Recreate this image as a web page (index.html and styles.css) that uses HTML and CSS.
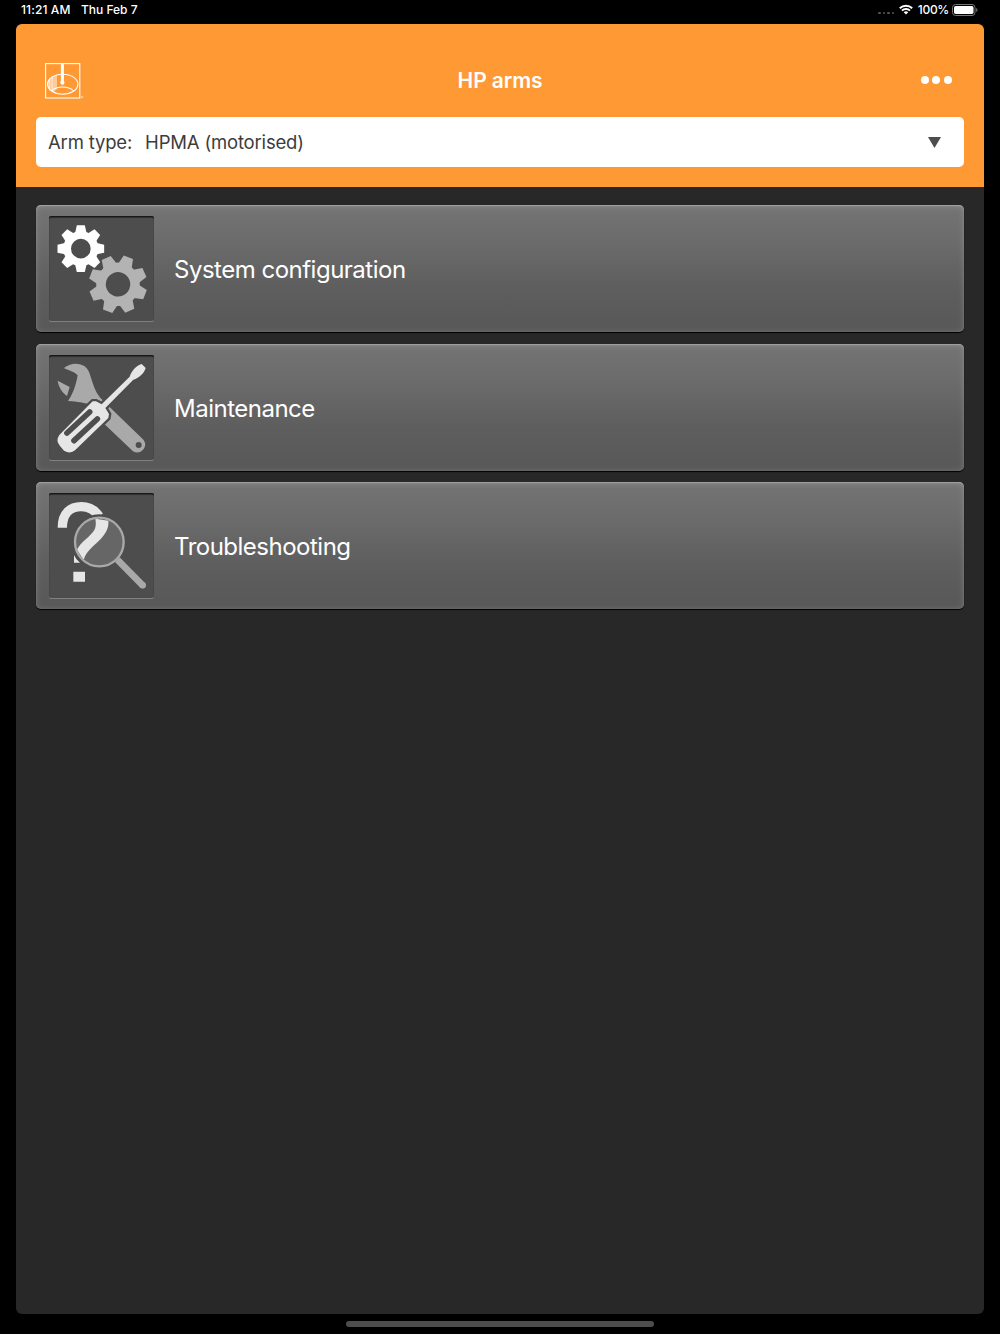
FILE: index.html
```html
<!DOCTYPE html>
<html lang="en">
<head>
  <meta charset="UTF-8">
  <meta name="viewport" content="width=device-width, initial-scale=1.0">
  <title>HP arms</title>
  <link rel="stylesheet" href="styles.css">
</head>
<body>
  <div class="status-bar">
    <span class="status-time">11:21 AM</span>
    <span class="status-date">Thu Feb 7</span>
    <div class="status-right">
      <div class="signal"><i></i><i></i><i></i><i></i></div>
      <svg class="wifi" viewBox="0 0 14 11">
        <path d="M.8 4.2a9 9 0 0 1 12.4 0M3 6.6a5.7 5.7 0 0 1 8 0" fill="none" stroke="#fff" stroke-width="2"/>
        <path d="M7 10.5L4.7 8.3a3.3 3.3 0 0 1 4.6 0z" fill="#fff"/>
      </svg>
      <span class="status-percent">100%</span>
      <svg class="battery" viewBox="0 0 26 12">
        <rect x=".5" y=".5" width="22.5" height="11" rx="3" fill="none" stroke="#777"/>
        <rect x="2" y="2" width="19.5" height="8" rx="1.7" fill="#fff"/>
        <path d="M24.2 4v4q1.3-.7 1.3-2t-1.3-2z" fill="#777"/>
      </svg>
    </div>
  </div>

  <div class="app">
    <header class="header">
      <div class="title-bar">
        <svg class="logo" viewBox="0 0 39 36">
          <rect x=".6" y=".6" width="34.2" height="34.4" fill="none" stroke="#fff" stroke-width="1.1"/>
          <path d="M12 11.8C5 13 2.4 17 2.4 20.7c0 4 3 7.4 6 8.3l3.6-3z" fill="#fff" opacity=".5"/>
          <path d="M7 14v14M4.5 16v9.5" stroke="#fff" stroke-width="1.2" opacity=".5"/>
          <ellipse cx="17.7" cy="21.2" rx="15.2" ry="10" fill="none" stroke="#fff" stroke-width="1.1"/>
          <path d="M6.5 27.8c5.5-5 16.5-5 22.3 0" fill="none" stroke="#fff" stroke-width="1.1"/>
          <path d="M17.4 1v19" stroke="#fff" stroke-width="3"/>
          <circle cx="17.4" cy="19.7" r="2.1" fill="#fff"/>
          <circle cx="37" cy="34" r=".9" fill="none" stroke="#fff" stroke-width=".5"/>
        </svg>
        <h1>HP arms</h1>
        <div class="more"><i></i><i></i><i></i></div>
      </div>
      <div class="arm-select">
        <span class="arm-label">Arm type:</span>
        <span class="arm-value">HPMA (motorised)</span>
        <svg class="arrow" viewBox="0 0 13 11"><path d="M0 0h13L6.5 11z" fill="#4d4d4d"/></svg>
      </div>
    </header>

    <main class="menu">
      <div class="menu-item">
        <svg class="icon" viewBox="51 49 315 315">
          <defs>
            <path id="tooth" d="M-17-48L-12-70H12L17-48z"/>
            <g id="gear">
              <use href="#tooth"/>
              <use href="#tooth" transform="rotate(45)"/>
              <use href="#tooth" transform="rotate(90)"/>
              <use href="#tooth" transform="rotate(135)"/>
              <use href="#tooth" transform="rotate(180)"/>
              <use href="#tooth" transform="rotate(225)"/>
              <use href="#tooth" transform="rotate(270)"/>
              <use href="#tooth" transform="rotate(315)"/>
              <circle r="41" fill="none" stroke-width="23"/>
            </g>
          </defs>
          <use href="#gear" transform="translate(146.5 147)" class="gear-light"/>
          <use href="#gear" transform="translate(258 254) rotate(21) scale(1.24)" class="gear-dark"/>
        </svg>
        <span>System configuration</span>
      </div>

      <div class="menu-item">
        <svg class="icon" viewBox="51 45 315 315">
          <path d="M96 84C112 70 139 66 158 79C181 95 176 145 211 180L178 190C160 193 145 184 108 183C119 166 130 146 137 106C124 92 109 92 96 84z" fill="#a9a9a9"/>
          <path d="M77 122L113 141L105 168C89 156 80 141 77 122z" fill="#a9a9a9"/>
          <path d="M205 174L335 300A24 24 0 0 1 303 334L198 234z" fill="#a9a9a9"/>
          <circle cx="320" cy="315" r="9" fill="#4d4d4d"/>
          <path d="M82 285L182 184L192 184L209 193L293 110C300 91 313 76 329 72L341 84C337 99 322 114 304 119L220 204L231 222L229 234L129 331Q115 343 96 332L84 318Q70 302 82 285z" fill="#e6e6e6" stroke="#4d4d4d" stroke-width="14" paint-order="stroke"/>
          <path d="M105 279L173 216M126 302L196 237" stroke="#4d4d4d" stroke-width="17" stroke-linecap="round"/>
        </svg>
        <span>Maintenance</span>
      </div>

      <div class="menu-item">
        <svg class="icon" viewBox="51 46 315 315">
          <path d="M91 150C91 106 116 87 148 87C173 87 190 99 201 116" fill="none" stroke="#e6e6e6" stroke-width="28"/>
          <path d="M124 282h35v30h-35zM126 232Q132 246 144 255H126z" fill="#e6e6e6"/>
          <circle cx="202" cy="193" r="83" fill="#4d4d4d"/>
          <circle cx="202" cy="193" r="74" fill="#666"/>
          <path d="M190 123L229 129C232 156 215 176 193 197C171 217 161 228 155 247L135 216C146 193 175 177 187 157Q194 143 190 123z" fill="#e6e6e6"/>
          <circle cx="202" cy="193" r="73" fill="none" stroke="#a9a9a9" stroke-width="7"/>
          <path d="M256 246L332 323" stroke="#a9a9a9" stroke-width="20"/>
          <circle cx="332" cy="323" r="10" fill="#a9a9a9"/>
        </svg>
        <span>Troubleshooting</span>
      </div>
    </main>
  </div>

  <div class="home-indicator"></div>
</body>
</html>
```

FILE: styles.css
```css
* {
  box-sizing: border-box;
}

body {
  height: 1334px;
  margin: 0;
  background-color: #000;
  color: #fff;
  font-family: Inter, "Liberation Sans", sans-serif;
  overflow: hidden;
}

.status-bar {
  display: flex;
  align-items: center;
  height: 24px;
  padding: 0 22px 5px 21px;
  font-size: 12px;
  font-weight: 500;
}

.status-time {
  letter-spacing: 0.1px;
}

.status-date {
  margin-left: 10.5px;
}

.status-right {
  display: flex;
  align-items: center;
  margin-left: auto;
}

.signal {
  display: flex;
  gap: 2px;
  margin: 7px 5px 0 0;
}

.signal i {
  width: 2.5px;
  height: 2.5px;
  border-radius: 50%;
  background-color: #555;
}

.wifi {
  width: 14px;
  height: 11px;
  margin-right: 4.5px;
}

.status-percent {
  letter-spacing: -0.3px;
}

.battery {
  width: 26px;
  height: 12px;
  margin-left: 3px;
}

.app {
  height: 1290px;
  margin: 0 16px;
  border-radius: 6px;
  background-color: #282828;
  overflow: hidden;
}

.header {
  height: 162.5px;
  padding: 34px 20px 0;
  background-color: #ff9933;
}

.title-bar {
  display: grid;
  grid-template-columns: 1fr auto 1fr;
  align-items: center;
  height: 45px;
  padding: 0 12.5px 0 8.5px;
}

.logo {
  width: 39px;
  height: 36px;
}

h1 {
  margin: 0;
  padding-left: 4px;
  font-size: 21px;
  font-weight: 600;
  letter-spacing: -0.1px;
}

.more {
  display: flex;
  justify-content: flex-end;
  gap: 3.4px;
  margin-bottom: 1.5px;
}

.more i {
  width: 8px;
  height: 8px;
  border-radius: 50%;
  background-color: #fff;
}

.arm-select {
  display: flex;
  align-items: center;
  height: 50px;
  margin-top: 14px;
  padding: 0 23.5px 1px 12px;
  border-radius: 5px;
  background-color: #fff;
  color: #3c3c3c;
  font-size: 18.5px;
  letter-spacing: -0.18px;
}

.arm-value {
  margin-left: 13px;
}

.arrow {
  width: 13px;
  height: 11px;
  margin: 2px 0 0 auto;
}

.menu {
  display: flex;
  flex-direction: column;
  gap: 11.5px;
  padding: 18.5px 20px;
}

.menu-item {
  display: flex;
  align-items: center;
  gap: 20.5px;
  height: 127px;
  padding: 0 12.5px;
  border-radius: 5px;
  background: linear-gradient(#747474, #6b6b6b 30%, #5e5e5e 65%, #585858);
  box-shadow: inset 0 1px 1px #a0a0a0, inset 0 1px 6px rgba(255, 255, 255, 0.2), 0 1px 1px #000;
  font-size: 24px;
  letter-spacing: -0.5px;
}

.menu-item span {
  padding-top: 2px;
}

.icon {
  width: 105px;
  height: 105px;
  border-radius: 2px;
  background-color: #4d4d4d;
  box-shadow: inset 0 1.5px 1px #161616, 0 1px 0 #808080;
}

.gear-light {
  fill: #fff;
  stroke: #fff;
}

.gear-dark {
  fill: #b3b3b3;
  stroke: #b3b3b3;
}

#tooth {
  stroke: none;
}

.home-indicator {
  width: 308px;
  height: 6px;
  margin: 7px auto 0;
  border-radius: 3px;
  background-color: #4d4d4d;
}
```
